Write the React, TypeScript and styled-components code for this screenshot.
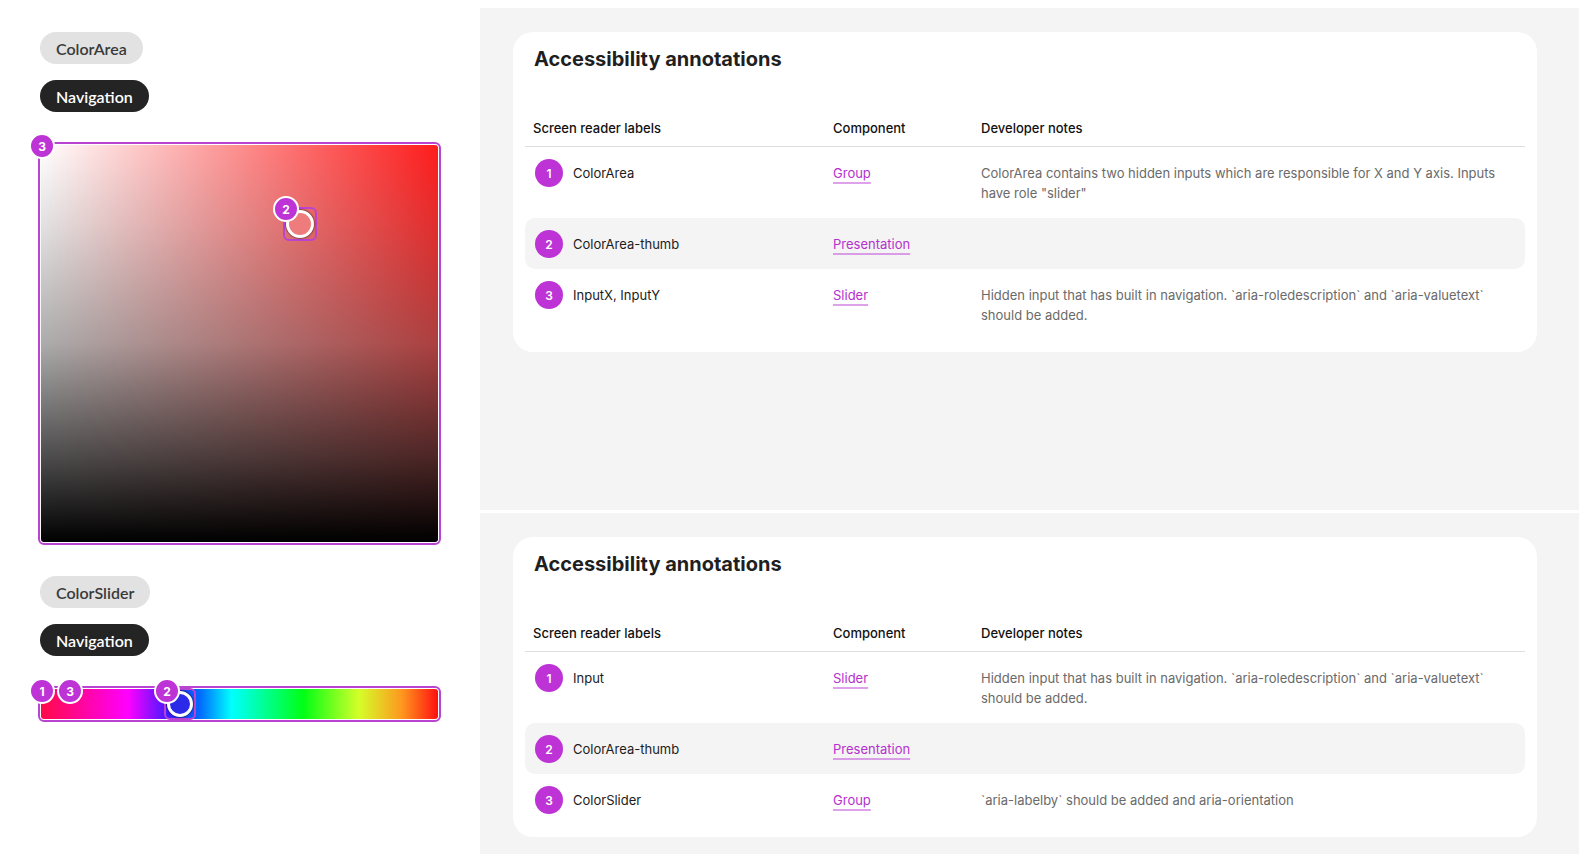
import React from "react";
import styled, { createGlobalStyle } from "styled-components";

const PURPLE = "#bd33d6";
const OUTLINE = "#b944d1";

const GlobalStyle = createGlobalStyle`
  html, body { margin: 0; padding: 0; background: #fff; }
  body { font-family: Inter, "Liberation Sans", sans-serif; }
  *, *::before, *::after { box-sizing: border-box; }
`;

const Page = styled.div`
  display: flex;
  width: 100%;
  min-height: 100vh;
  background: #fff;
`;

const LeftPanel = styled.aside`
  width: 480px;
  flex-shrink: 0;
  padding: 32px 0 0 40px;
  display: flex;
  flex-direction: column;
  gap: 31px;
`;

const Group = styled.section`
  display: flex;
  flex-direction: column;
  gap: 30px;
`;

const ChipStack = styled.div`
  display: flex;
  flex-direction: column;
  align-items: flex-start;
  gap: 16px;
`;

const Chip = styled.span<{ $dark?: boolean }>`
  display: inline-flex;
  align-items: center;
  height: 32px;
  padding: 0 16px;
  border-radius: 16px;
  font-family: Lato, "Open Sans", sans-serif;
  font-size: 16px;
  font-weight: 600;
  background: ${(p) => (p.$dark ? "#242424" : "#e2e2e2")};
  color: ${(p) => (p.$dark ? "#fff" : "#3a3a3a")};
`;

const Badge = styled.span<{ $x: number; $y: number }>`
  position: absolute;
  left: ${(p) => p.$x}px;
  top: ${(p) => p.$y}px;
  width: 26px;
  height: 26px;
  border-radius: 50%;
  background: ${PURPLE};
  border: 2px solid #fff;
  color: #fff;
  font-family: Inter, sans-serif;
  font-size: 12px;
  font-weight: 700;
  display: flex;
  align-items: center;
  justify-content: center;
  z-index: 2;
`;

const AreaFrame = styled.div`
  position: relative;
  width: 403px;
  height: 403px;
  margin-left: -2px;
  border: 2px solid ${OUTLINE};
  border-radius: 6px;
  padding: 1px;
  background: #fff;
`;

const AreaCanvas = styled.div`
  position: relative;
  width: 100%;
  height: 100%;
  border-radius: 3px;
  background:
    linear-gradient(
      to bottom,
      rgba(110, 110, 110, 0) 0%,
      rgba(110, 110, 110, 0.2) 20%,
      rgba(96, 96, 96, 0.52) 50%,
      rgba(40, 40, 40, 0.82) 78%,
      rgba(0, 0, 0, 1) 100%
    ),
    linear-gradient(to right, #fff 0%, #ff1c1c 100%);
`;

const ThumbFrame = styled.div<{ $x: number; $y: number; $size: number }>`
  position: absolute;
  left: ${(p) => p.$x}px;
  top: ${(p) => p.$y}px;
  width: ${(p) => p.$size}px;
  height: ${(p) => p.$size}px;
  border: 2px solid ${OUTLINE};
  border-radius: 6px;
  display: flex;
  align-items: center;
  justify-content: center;
`;

const ThumbDot = styled.div<{ $color: string; $size: number }>`
  width: ${(p) => p.$size}px;
  height: ${(p) => p.$size}px;
  border-radius: 50%;
  border: 3px solid #fff;
  background: ${(p) => p.$color};
  box-shadow: 0 0 0 1px rgba(0, 0, 0, 0.25), 0 0 3px rgba(0, 0, 0, 0.3);
`;

const SliderFrame = styled.div`
  position: relative;
  width: 403px;
  height: 36px;
  margin-left: -2px;
  border: 2px solid ${OUTLINE};
  border-radius: 6px;
  padding: 1px;
  background: #fff;
`;

const SliderTrack = styled.div`
  position: relative;
  height: 100%;
  border-radius: 3px;
  background: linear-gradient(
    to right,
    hsl(345, 100%, 52%) 0%,
    hsl(300, 100%, 50%) 22%,
    hsl(250, 100%, 55%) 32%,
    hsl(215, 100%, 50%) 40%,
    hsl(180, 100%, 50%) 48%,
    hsl(125, 100%, 50%) 66%,
    hsl(72, 100%, 58%) 80%,
    hsl(32, 100%, 56%) 91%,
    hsl(0, 100%, 53%) 100%
  );
`;

const RightColumn = styled.main`
  flex: 1;
  display: flex;
  flex-direction: column;
  gap: 3px;
  padding-top: 8px;
`;

const Section = styled.section`
  height: 502px;
  flex-shrink: 0;
  background: #f4f4f4;
  padding: 24px 0 0 33px;
`;

const Card = styled.div`
  width: 1024px;
  background: #fff;
  border-radius: 20px;
  padding: 15px 12px 12px;
`;

const Title = styled.h2`
  margin: 0 0 47px;
  padding-left: 9px;
  font-size: 20px;
  line-height: 24px;
  font-weight: 700;
  color: #1f1f1f;
`;

const Grid = styled.div`
  display: grid;
  grid-template-columns: 300px 148px 1fr;
  align-items: start;
`;

const HeaderRow = styled(Grid)`
  padding-bottom: 8px;
  border-bottom: 1px solid #dedede;
`;

const HeadCell = styled.div`
  padding-left: 8px;
  font-size: 13px;
  line-height: 20px;
  font-weight: 500;
  color: #111;
`;

const Row = styled(Grid)<{ $shaded: boolean }>`
  padding: 16px 0 15px;
  border-radius: 10px;
  background: ${(p) => (p.$shaded ? "#f4f4f4" : "transparent")};
`;

const LabelCell = styled.div`
  height: 20px;
  padding-left: 10px;
  display: flex;
  align-items: center;
  gap: 10px;
  font-size: 13px;
  color: #1c1c1c;
`;

const NumberDot = styled.span`
  width: 28px;
  height: 28px;
  flex-shrink: 0;
  border-radius: 50%;
  background: ${PURPLE};
  color: #fff;
  font-size: 12px;
  font-weight: 600;
  display: flex;
  align-items: center;
  justify-content: center;
`;

const LinkCell = styled.div`
  padding-left: 8px;
  font-size: 13px;
  line-height: 20px;
`;

const CompLink = styled.a`
  color: #b431cd;
  text-decoration: underline;
  text-decoration-color: rgba(190, 70, 215, 0.5);
  text-decoration-thickness: 1.5px;
  text-underline-offset: 4px;
  cursor: pointer;
`;

const NoteCell = styled.div`
  padding: 0 20px 0 8px;
  font-size: 13px;
  line-height: 20px;
  color: #6a6a6a;
`;

type RowData = { label: string; comp: string; note: string };

const tables: RowData[][] = [
  [
    {
      label: "ColorArea",
      comp: "Group",
      note: 'ColorArea contains two hidden inputs which are responsible for X and Y axis. Inputs have role "slider"',
    },
    { label: "ColorArea-thumb", comp: "Presentation", note: "" },
    {
      label: "InputX, InputY",
      comp: "Slider",
      note: "Hidden input that has built in navigation. `aria-roledescription` and `aria-valuetext` should be added.",
    },
  ],
  [
    {
      label: "Input",
      comp: "Slider",
      note: "Hidden input that has built in navigation. `aria-roledescription` and `aria-valuetext` should be added.",
    },
    { label: "ColorArea-thumb", comp: "Presentation", note: "" },
    {
      label: "ColorSlider",
      comp: "Group",
      note: "`aria-labelby` should be added and aria-orientation",
    },
  ],
];

function AnnotationCard({ rows }: { rows: RowData[] }) {
  return (
    <Card>
      <Title>Accessibility annotations</Title>
      <HeaderRow>
        <HeadCell>Screen reader labels</HeadCell>
        <HeadCell>Component</HeadCell>
        <HeadCell>Developer notes</HeadCell>
      </HeaderRow>
      {rows.map((r, i) => (
        <Row key={i} $shaded={i === 1}>
          <LabelCell>
            <NumberDot>{i + 1}</NumberDot>
            {r.label}
          </LabelCell>
          <LinkCell>
            <CompLink>{r.comp}</CompLink>
          </LinkCell>
          <NoteCell>{r.note}</NoteCell>
        </Row>
      ))}
    </Card>
  );
}

export default function App() {
  return (
    <Page>
      <GlobalStyle />
      <LeftPanel>
        <Group>
          <ChipStack>
            <Chip>ColorArea</Chip>
            <Chip $dark>Navigation</Chip>
          </ChipStack>
          <AreaFrame>
            <Badge $x={-11} $y={-11}>3</Badge>
            <AreaCanvas>
              <ThumbFrame $x={242} $y={62} $size={34}>
                <Badge $x={-12} $y={-13}>2</Badge>
                <ThumbDot $color="#ee7c7c" $size={28} />
              </ThumbFrame>
            </AreaCanvas>
          </AreaFrame>
        </Group>
        <Group>
          <ChipStack>
            <Chip>ColorSlider</Chip>
            <Chip $dark>Navigation</Chip>
          </ChipStack>
          <SliderFrame>
            <Badge $x={-11} $y={-10}>1</Badge>
            <Badge $x={17} $y={-10}>3</Badge>
            <SliderTrack>
              <ThumbFrame $x={123} $y={-1} $size={32}>
                <Badge $x={-12} $y={-12}>2</Badge>
                <ThumbDot $color="#2a2ae8" $size={26} />
              </ThumbFrame>
            </SliderTrack>
          </SliderFrame>
        </Group>
      </LeftPanel>
      <RightColumn>
        {tables.map((rows, i) => (
          <Section key={i}>
            <AnnotationCard rows={rows} />
          </Section>
        ))}
      </RightColumn>
    </Page>
  );
}
